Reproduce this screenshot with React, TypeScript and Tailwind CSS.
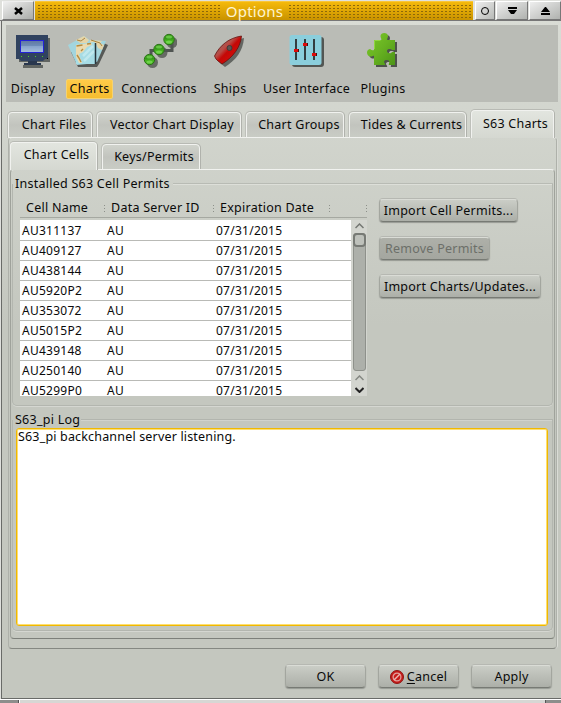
import React from "react";

const rows = ["AU311137", "AU409127", "AU438144", "AU5920P2", "AU353072", "AU5015P2", "AU439148", "AU250140", "AU5299P0"];

function DisplayIcon() {
  return (
    <svg width="36" height="36" viewBox="0 0 36 36">
      <g fill="#444846" opacity=".75"><path d="M4 4h31v24H4z" /><path d="M8 31h20v3H8z" /></g>
      <path d="M1 1h32v24h-3l-2 2H6l-2-2H1z" fill="#30425f" />
      <path d="M13 27h9v2h4v2H9v-2h4z" fill="#29374e" />
      <defs><linearGradient id="scr" x2="0" y2="1"><stop stopColor="#60779f" /><stop offset=".45" stopColor="#6f8db9" /><stop offset=".5" stopColor="#88a4cb" /><stop offset="1" stopColor="#a6bfdd" /></linearGradient></defs>
      <rect x="5.5" y="6.5" width="23" height="12" fill="url(#scr)" stroke="#2222d8" />
      <path d="M6 22h1v1H6zM13 22h1v1h-1zM20 22h1v1h-1zM27 22h1v1h-1z" fill="#4dc52a" />
      <path d="M32 24h1v1h-1z" fill="#000" />
    </svg>
  );
}
function ChartsIcon() {
  return (
    <svg width="40" height="34" viewBox="0 0 40 34">
      <path d="M10 32L3 17l6-2 22-9 9 4-9 19-2 3z" fill="#3d403e" opacity=".8" />
      <path d="M0 10L16 1l10 7-7 21-10 1z" fill="#a2d5de" />
      <path d="M18 5l20 1-9 21-11-3z" fill="#a2d5de" />
      <path d="M8 5l8-4 5 4-3 4-6-1zM22 5l12 1-2 2 4 2-2 5-4-2-2-4-6-1z" fill="#e5d5a9" />
      <path d="M9 5l4 1 4-3M23 5l6 2 3 1 2 3" stroke="#aa8542" fill="none" />
      <path d="M8 9l19-2v22H8z" fill="#a6dce5" />
      <path d="M8 10l15-2 1 2-5 2-4 5-4 2 1 4 2 5h-3l-3-6z" fill="#eadab0" />
      <path d="M8.500 11l6-1M19 9l4-.5M15 14l-2 2M9 20l2 3 2 4" stroke="#b58b3e" strokeWidth="1.400" fill="none" />
      <path d="M16 26l10-10M15 21l10-10" stroke="#caeef2" strokeWidth="2.500" opacity=".7" />
      <path d="M27.500 8v21" stroke="#26353c" strokeWidth="1.500" />
    </svg>
  );
}
function Node({ x, y }: { x: number; y: number }) {
  return <g><circle cx={x} cy={y} r="5.2" fill="#45b41f" stroke="#2c7019" /><path d={`M${x - 4.500} ${y}a4.500 4.500 0 0 1 9 0z`} fill="#35961a" /><ellipse cx={x} cy={y - 2.5} rx="3" ry="1.5" fill="#65c644" /><ellipse cx={x} cy={y + 2.500} rx="3" ry="1.500" fill="#70d14c" /></g>;
}
function ConnectionsIcon() {
  return (
    <svg width="36" height="38" viewBox="0 0 36 38">
      <g fill="#3b3f3b" opacity=".65"><circle cx="11.500" cy="29.500" r="5.500" /><circle cx="21" cy="19.500" r="5.500" /><circle cx="31" cy="9.500" r="5.500" /></g>
      <path d="M10 26v-8.500h9M19 17.500h12V9" fill="none" stroke="#505552" strokeWidth="3" />
      <Node x={8.5} y={26.5} /><Node x={18} y={16.5} /><Node x={28} y={6.5} />
    </svg>
  );
}
function ShipsIcon() {
  return (
    <svg width="34" height="36" viewBox="0 0 34 36">
      <defs><linearGradient id="hull" x2="1" y2="1"><stop stopColor="#85706c" /><stop offset=".4" stopColor="#b84b45" /><stop offset=".52" stopColor="#c50806" /><stop offset="1" stopColor="#db1511" /></linearGradient></defs>
      <path d="M5 25C10 14 20 6 31 4c-1 13-8 22-19 29l-5-4z" fill="#454946" opacity=".75" />
      <path d="M1.500 22C7 11 16 4 28.500 2c-1 11-8 21-19.500 28l-4-3-2-2z" fill="url(#hull)" stroke="#64110e" strokeWidth=".8" />
      <circle cx="16.500" cy="14" r="2.500" fill="#5c5552" stroke="#413936" />
    </svg>
  );
}
function InterfaceIcon() {
  return (
    <svg width="36" height="36" viewBox="0 0 36 36">
      <rect x="3" y="3" width="32" height="30" rx="3" fill="#404442" opacity=".85" />
      <rect x="0.500" y="1" width="32" height="30" rx="2.500" fill="#8bcedc" />
      <path d="M7 5v21M16 5v21M25 5v21" stroke="#343d40" strokeWidth="2" />
      <path d="M8 15h2v3H8zM17 9h2v3h-2zM26 19h2v3h-2z" fill="#421313" />
      <path d="M5 15h4v3H5zM14 9h4v3h-4zM23 19h4v3h-4z" fill="#df0b0b" />
    </svg>
  );
}
function PluginsIcon() {
  const d = "M7 8h7c1-1-.500-2-.500-4 0-4 7.500-4 7.500 0 0 2-1.500 3-.500 4H28v10h-3c-1-1.500-5-1.500-5 1s4 3 5 1h3v13h-6c-1-1 1-2 0-4-1-1.500-5-1.500-5 1 0 1 2 2 1 3H7v-9c-1-1-2 1-4 .500-4-1.500-4-7 0-7.500 1 0 1 2 4 1z";
  return (
    <svg width="34" height="38" viewBox="0 0 34 38">
      <defs><linearGradient id="puz" x2="1" y2="1"><stop stopColor="#7cc82a" /><stop offset=".5" stopColor="#68b321" /><stop offset="1" stopColor="#4c9417" /></linearGradient></defs>
      <path d={d} transform="translate(2 2)" fill="#3b403a" opacity=".85" />
      <path d={d} fill="url(#puz)" /><path d="M7.500 17V8.500h6" stroke="#90d641" fill="none" />
    </svg>
  );
}

function Tool({ icon, label, className, text = "", iconClass = "pt-[9px]" }: { icon: React.ReactNode; label: string; className: string; text?: string; iconClass?: string }) {
  return (
    <div className={`flex h-full shrink-0 flex-col items-center ${className}`}>
      <div className={`flex h-[54px] w-full items-start justify-center ${iconClass}`}>{icon}</div>
      <div className={`flex h-5 w-full items-center justify-center ${text}`}>{label}</div>
    </div>
  );
}

function Tab({ label, className, active = false }: { label: string; className: string; active?: boolean }) {
  return (
    <div className={`flex shrink-0 justify-center rounded-t-[4px] border-x border-t border-[#f1f2ef] shadow-[0_-1px_0_#b8bab4,1px_0_0_#b0b2ac,-1px_0_0_#bec0ba] ${active ? "z-10 bg-linear-to-b from-[#e2e5df] to-[#d5d8d1]" : "border-b bg-linear-to-b from-[#d0d3cc] via-[#c2c4be] to-[#c9ccc5]"} ${className}`}>{label}</div>
  );
}

function Button({ children, className, disabled = false }: { children: React.ReactNode; className: string; disabled?: boolean }) {
  return (
    <div className={`flex h-[23px] items-center justify-center rounded-[4px] border border-t-[#dadcd6] border-x-[#a3a69f] border-b-[#777a74] shadow-[0_1px_1px_#969993,0_-1px_0_#b6b8b2] ${disabled ? "bg-linear-to-b from-[#aeb0a9] to-[#a4a69f] text-[#6c6f69]" : "bg-linear-to-b from-[#cacdc6] to-[#acafa8]"} ${className}`}>{children}</div>
  );
}

function Dots() {
  return <div className="flex w-px flex-col gap-[2px]"><i className="h-px bg-[#8d908a]" /><i className="h-px bg-[#8d908a]" /><i className="h-px bg-[#8d908a]" /></div>;
}

export default function App() {
  return (
    <div className="flex h-[703px] w-[561px] flex-col overflow-hidden bg-[#dfe0dc] whitespace-nowrap font-['Noto_Sans',sans-serif] text-[12.5px] leading-[18px] tracking-[0.25px] text-[#0a0a0a]">
      <header className="mt-px flex h-5 shrink-0 border-b border-[#777]">
        <div className="ml-0.5 flex h-[19px] w-8 items-center justify-center border border-[#777] border-t-[#eee] border-l-white bg-linear-to-br from-[#f0f0f0] to-[#aaaca9]">
          <svg width="9" height="8" viewBox="0 0 9 8"><path d="M1 1l7 6M8 1L1 7" stroke="#000" strokeWidth="2.500" /></svg>
        </div>
        <div className="ml-px flex h-[19px] w-[438px] items-center border-t border-[#f9c638] bg-linear-to-b from-[#f5b90b] to-[#c99300] text-[#fff5cf]">
          <div className="ml-0.5 h-[14px] w-[184px] bg-[radial-gradient(#8e6809_0.7px,transparent_0.8px)] bg-[size:4px_3px]" />
          <div className="w-[67px] text-center text-[15px]">Options</div>
          <div className="h-[14px] w-[183px] bg-[radial-gradient(#8e6809_0.7px,transparent_0.8px)] bg-[size:4px_3px]" />
        </div>
        <div className="ml-0.5 flex h-[19px] w-5 items-center justify-center border border-[#777] border-t-white border-l-white bg-linear-to-br from-[#eee] to-[#b8bab7]"><div className="size-2 rounded-full border border-black" /></div>
        <div className="ml-px flex h-[19px] w-8 items-center justify-center border border-[#777] border-t-white border-l-white bg-linear-to-br from-[#eee] to-[#b0b2af]"><svg width="9" height="8"><path d="M0 0h9v2H0zM0 3h9L6 7H3z" /></svg></div>
        <div className="ml-px flex h-[19px] w-8 items-center justify-center border border-[#777] border-t-white border-l-white bg-linear-to-br from-[#eee] to-[#b0b2af]"><svg width="9" height="8"><path d="M0 6h9v2H0zM0 5h9L5 0H4z" /></svg></div>
      </header>
      <main className="ml-px flex h-[678px] shrink-0 flex-col border-b border-l border-[#696b68] bg-linear-to-b from-[#d9dcd5] via-[#c4c7bf] via-45% to-[#c4c7bf]">
        <nav className="mt-1 ml-1 flex h-[77px] w-[552px] shrink-0 bg-[#babcb6]">
          <Tool className="w-[54px]" label="Display" icon={<DisplayIcon />} />
          <Tool className="ml-1.5 w-[47px]" label="Charts" icon={<ChartsIcon />} iconClass="pl-0 pt-[10px] -ml-1" text="rounded-[2px] border border-[#f7d36e] bg-linear-to-b from-[#ffcb49] to-[#f5bd2f]" />
          <Tool className="ml-[7px] w-[78px]" label="Connections" icon={<ConnectionsIcon />} iconClass="pt-[8px]" />
          <Tool className="ml-2 w-12" label="Ships" icon={<ShipsIcon />} iconClass="pt-[9px]" />
          <Tool className="ml-1 w-[97px]" label="User Interface" icon={<InterfaceIcon />} />
          <Tool className="ml-0.5 w-[52px]" label="Plugins" icon={<PluginsIcon />} iconClass="pt-[7px] pl-0.5" />
        </nav>
        <div className="mt-2 ml-1.5 flex h-[28px] shrink-0 items-end">
          <Tab className="h-[26px] w-[84px] pt-[3px] pl-2" label="Chart Files" />
          <Tab className="ml-[5px] h-[26px] w-[144px] pt-[3px] pl-1.5" label="Vector Chart Display" />
          <Tab className="ml-[5px] h-[26px] w-[98px] pt-[3px] pl-2" label="Chart Groups" />
          <Tab className="ml-[5px] h-[26px] w-[117px] pt-[3px] pl-2" label="Tides &amp; Currents" />
          <Tab active className="ml-[5px] h-[28px] w-[83px] pt-1 pl-1.5" label="S63 Charts" />
        </div>
        <section className="-mt-px ml-1.5 flex h-[512px] w-[549px] shrink-0 flex-col rounded-[4px] border border-t-[#f1f2ef] border-x-[#aeb1aa] border-b-[#858882] px-px shadow-[1px_0_0_#dadcd6]">
          <div className="mt-[3px] flex h-[29px] shrink-0 items-end">
            <Tab active className="h-[28px] w-[87px] pt-[3px] pl-1.5" label="Chart Cells" />
            <Tab className="ml-[5px] h-[26px] w-[98px] pt-[3px] pl-1.5" label="Keys/Permits" />
          </div>
          <div className="-mt-px flex h-[470px] w-[545px] shrink-0 flex-col rounded-[4px] border border-t-[#f1f2ef] border-x-[#9fa29b] border-b-[#7d807a] px-px">
            <div className="mt-[5px] flex h-[18px] shrink-0 items-center">
              <span className="ml-[3px] w-[158px]">Installed S63 Cell Permits</span>
              <i className="h-px flex-1 bg-[#dddfd9] shadow-[0_-1px_0_#b8bbb4]" />
            </div>
            <div className="-mt-[9px] flex h-[222px] shrink-0 rounded-b-[5px] border-x border-b border-[#b3b6af] shadow-[0_1px_0_#d5d7d1]">
              <div className="mt-[15px] ml-[7px] h-[197px] w-[347px] shrink-0 overflow-hidden">
                <div className="flex h-[19px] items-center border-b border-[#a5a8a1]">
                  <span className="ml-[6px] w-[78px]">Cell Name</span><Dots />
                  <span className="ml-[6px] w-[102px]">Data Server ID</span><Dots />
                  <span className="ml-[6px] w-[109px]">Expiration Date</span><Dots /><div className="w-9" /><Dots />
                </div>
                <div className="mt-[2px] flex h-[176px]">
                  <div className="w-[331px] overflow-hidden bg-white pt-px">
                    {rows.map((name) => <div key={name} className="flex h-5 items-center border-b border-[#b9bab6] pt-px text-[12px]"><span className="w-[87px] pl-0.5">{name}</span><span className="w-[109px]">AU</span><span>07/31/2015</span></div>)}
                  </div>
                  <div className="flex w-4 flex-col items-center bg-[#d3d5cf]">
                    <svg className="mt-[3px] shrink-0" width="9" height="6"><path d="M.5 5L4.500 1l4 4" fill="none" stroke="#747773" strokeWidth="1.500" /></svg>
                    <div className="mt-1 h-[138px] w-[13px] shrink-0 rounded-[3px] border border-[#8e918b] bg-[#adb0aa]"><div className="-mx-px -mt-px h-[14px] rounded-[4px] border-2 border-[#777a75] bg-[#bec1bb]" /></div>
                    <svg className="mt-[4px] shrink-0" width="9" height="6"><path d="M.5 5L4.500 1l4 4" fill="none" stroke="#858883" strokeWidth="1.500" /></svg>
                    <svg className="mt-[6px] shrink-0" width="9" height="6"><path d="M.5 1l4 4 4-4" fill="none" stroke="#222" strokeWidth="2" /></svg>
                  </div>
                </div>
              </div>
              <div className="mt-[15px] ml-3 flex flex-col items-start gap-[15px]">
                <Button className="w-[139px]">Import Cell Permits...</Button>
                <Button disabled className="w-[111px]">Remove Permits</Button>
                <Button className="w-[162px]">Import Charts/Updates...</Button>
              </div>
            </div>
            <div className="mt-[5px] flex h-[18px] shrink-0 items-center">
              <span className="ml-[3px] w-[66px]">S63_pi Log</span>
              <i className="h-px flex-1 bg-[#d1d3cd] shadow-[0_-1px_0_#b2b5ae]" />
            </div>
            <div className="-mt-[9px] h-[211px] shrink-0 rounded-b-[5px] border-x border-b border-[#b3b6af] pt-[8px] pl-[3px] shadow-[0_1px_0_#d5d7d1]">
              <div className="h-[198px] w-[532px] rounded-[3px] border border-[#f0b800] bg-white pl-px tracking-[0.17px] shadow-[inset_0_0_0_1px_#ffdf70]"><p className="-mt-px">S63_pi backchannel server listening.</p></div>
            </div>
          </div>
        </section>
        <footer className="mt-4 ml-[283px] flex gap-3">
          <Button className="w-[81px]">OK</Button>
          <Button className="w-[81px] gap-[3px]">
            <svg width="14" height="14" viewBox="0 0 14 14"><circle cx="7" cy="7" r="6.500" fill="#c61b19" stroke="#8f1815" /><circle cx="7" cy="7" r="3.900" fill="none" stroke="#e0a09b" strokeWidth="1.300" /><path d="M4 10l6-6" stroke="#e9b6b1" strokeWidth="1.500" /></svg>
            <span><u className="underline-offset-2">C</u>ancel</span>
          </Button>
          <Button className="w-[81px]">Apply</Button>
        </footer>
      </main>
      <div className="flex h-1 shrink-0 border-t border-white bg-[#d7d7d4]"><i className="h-1 w-[19px] border-r border-[#555] bg-[#8d8e8c]" /><i className="h-1 flex-1 border-l border-white" /><i className="h-1 w-4 border-l border-[#555] bg-[#8d8e8c]" /></div>
    </div>
  );
}
